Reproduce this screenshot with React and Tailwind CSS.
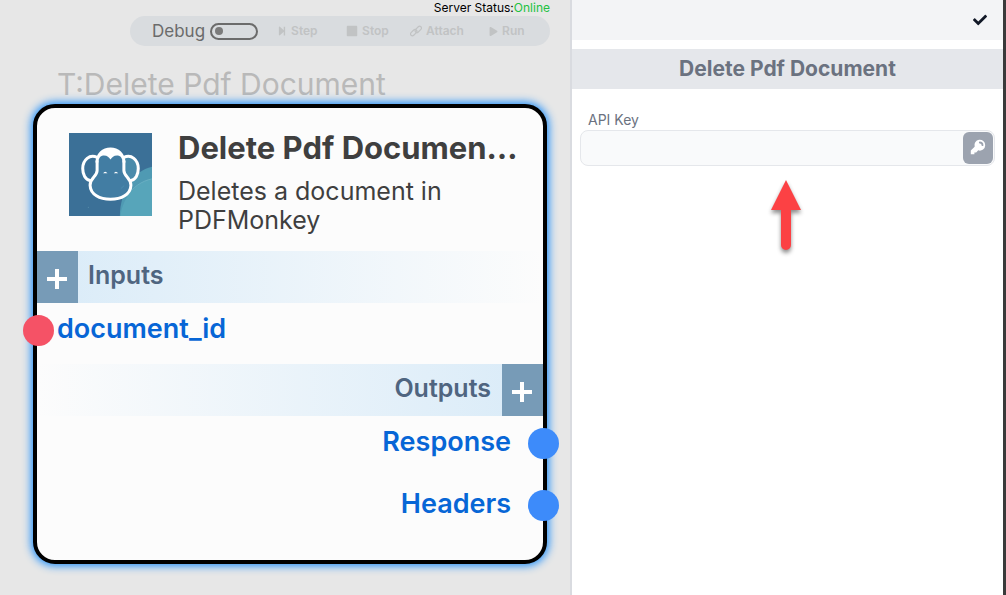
import React from "react";
import { FaCheck, FaPlay, FaStepForward, FaStop } from "react-icons/fa";
import { HiKey } from "react-icons/hi";

function MonkeyLogo() {
  return (
    <svg viewBox="0 0 248 248" className="size-[83px] shrink-0" role="img" aria-label="PDFMonkey">
      <rect width="248" height="248" fill="#3b7097" />
      <path d="M152 248C152 178 192 112 248 101V248Z" fill="#4f9ab3" />
      <path d="M154 248C160 190 205 144 248 137V248Z" fill="#57a5ba" />
      <path d="M248 137C218 143 190 162 172 190" fill="none" stroke="#74b5c7" strokeWidth="2" />
      <path d="M163 72C185 62 207 76 208 106C209 126 199 143 185 145L163 123Z" fill="#4a8bab" />
      <path d="M86 76C96 36 152 36 162 76V116C163 130 176 134 184 146C198 218 50 218 62 146C72 134 86 130 86 116Z" fill="#427da3" />
      <path d="M79 88C80 60 100 43 124 43C148 43 168 60 169 88H160C160 76 155 68 146 67C134 66 129 72 124 79C119 72 114 66 102 67C93 68 88 76 88 88Z" fill="#fff" />
      <g fill="none" stroke="#fff" strokeWidth="9" strokeLinecap="round" strokeLinejoin="round">
        <path d="M84 73C62 62 41 80 41 106C41 124 49 140 63 142" />
        <path d="M164 73C186 62 207 80 207 106C207 124 199 140 185 142" />
        <path d="M84 84V112C84 130 63 134 63 156C64 184 92 198 124 198C156 198 184 184 185 156C185 134 164 130 164 112V84" />
      </g>
      <path d="M102 120Q108 111 115 120ZM134 120Q140 111 147 120Z" fill="#fff" />
      <path d="M155 166L165 157" stroke="#4f93b3" strokeWidth="2" />
      <circle cx="58" cy="222" r="2" fill="#5389a8" />
    </svg>
  );
}

function ChainIcon({ className }) {
  return (
    <svg viewBox="0 0 26 26" className={className} fill="none" stroke="currentColor" strokeWidth="2.6" aria-hidden="true">
      <g transform="rotate(-45 13 13)">
        <rect x="-1" y="8" width="16" height="8" rx="4" />
        <rect x="11" y="10" width="16" height="8" rx="4" />
      </g>
    </svg>
  );
}

function ToolButton({ icon: Icon, size = "size-3", children, className }) {
  return (
    <button type="button" disabled className={`flex items-center gap-1 text-xs font-semibold text-[#c1c3c4] ${className}`}>
      <Icon className={size} />
      {children}
    </button>
  );
}

function Toolbar() {
  return (
    <div className="mt-4 ml-[130px] flex h-[30px] w-[420px] items-center rounded-[15px] bg-[#d9dcdf] pl-[22px]">
      <label className="flex items-center gap-[5px] text-[17px] leading-6 text-[#6b6b6b]">
        Debug
        <span className="relative flex h-[17px] w-12 items-center rounded-full border-2 border-[#6b6b6b] pl-[3px]">
          <input type="checkbox" role="switch" className="absolute inset-0 m-0 appearance-none" />
          <span className="size-2 rounded-full bg-[#7b7b7b]" />
        </span>
      </label>
      <div className="ml-[19px] flex items-center">
        <ToolButton icon={FaStepForward} size="size-2.5" className="w-[69px]">Step</ToolButton>
        <ToolButton icon={FaStop} className="w-16">Stop</ToolButton>
        <ToolButton icon={ChainIcon} className="w-[79px]">Attach</ToolButton>
        <ToolButton icon={FaPlay} size="size-[9px]" className="w-12">Run</ToolButton>
      </div>
    </div>
  );
}

function AddButton({ label }) {
  return (
    <button type="button" aria-label={label} className="grid h-full w-[41px] shrink-0 place-items-center bg-[#779bb7] pt-1 pr-0.5">
      <svg viewBox="0 0 20 20" className="size-5" stroke="#fff" strokeWidth="4" aria-hidden="true">
        <path d="M10 0V20M0 10H20" />
      </svg>
    </button>
  );
}

function NodeCard() {
  return (
    <article className="relative ml-[33px] h-[460px] w-[514px] rounded-[22px] border-4 border-black bg-[#fcfcfc] shadow-[0_0_8px_2px_#2290fa]">
      <header className="flex h-[143px] gap-[26px] pt-[25px] pr-5 pl-8">
        <MonkeyLogo />
        <div className="min-w-0 flex-1">
          <h2 className="text-[31px] leading-[30px] font-bold whitespace-nowrap text-[#3f3f3f]">Delete Pdf Documen…</h2>
          <p className="mt-3.5 text-[25px] leading-[29px] text-[#3f3f3f]">Deletes a document in PDFMonkey</p>
        </div>
      </header>
      <section>
        <div className="flex h-[52px] items-center bg-linear-to-r from-[#d9ebf8] to-[#fcfcfc]">
          <AddButton label="Add input" />
          <h3 className="pb-1 pl-[10px] text-[25px] leading-8 font-semibold text-[#4f6580]">Inputs</h3>
        </div>
        <div className="relative flex h-[61px] items-start pt-2 pl-5">
          <span className="absolute top-3 -left-[14px] size-[31px] rounded-full bg-[#f55266]" />
          <span className="text-[27px] leading-9 font-semibold text-[#0766d6]">document_id</span>
        </div>
      </section>
      <section>
        <div className="flex h-[52px] items-center justify-end bg-linear-to-l from-[#d9ebf8] to-[#fcfcfc]">
          <h3 className="pr-[11px] pb-1 text-[25px] leading-8 font-semibold text-[#4f6580]">Outputs</h3>
          <AddButton label="Add output" />
        </div>
        {["Response", "Headers"].map((name) => (
          <div key={name} className="relative flex h-[62px] items-start justify-end pt-2 pr-8">
            <span className="text-[27px] leading-9 font-semibold text-[#0766d6]">{name}</span>
            <span className="absolute top-3 -right-[16px] size-[31px] rounded-full bg-[#3d8bfa]" />
          </div>
        ))}
      </section>
    </article>
  );
}

function Canvas() {
  return (
    <main className="min-w-0 border-r-2 border-[#d9dbe0] bg-[#e7e7e7]">
      <div className="relative">
        <p className="absolute top-0 right-5 text-xs text-black">
          Server Status:<span className="text-[#22c241]">Online</span>
        </p>
      </div>
      <div className="flow-root">
        <Toolbar />
      </div>
      <h1 className="mt-5 mb-0.5 pl-[57px] text-[30px] leading-9 text-[#b9b9b9]">T:Delete Pdf Document</h1>
      <NodeCard />
    </main>
  );
}

function Properties() {
  return (
    <aside className="min-w-0 border-r-3 border-[#3a3a3a] bg-white">
      <div className="flex h-10 items-center justify-end bg-[#f3f4f6] pr-4">
        <button type="button" aria-label="Confirm" className="text-[#111827]">
          <FaCheck className="size-[14px]" />
        </button>
      </div>
      <h2 className="mt-[9px] h-10 bg-[#e5e7eb] text-center text-[21px] leading-10 font-bold text-[#6b7280]">
        Delete Pdf Document
      </h2>
      <div className="mt-[21px] pr-2 pl-2">
        <label htmlFor="api-key" className="block pl-2 text-sm text-[#6b7280]">API Key</label>
        <div className="flex h-9 items-center rounded-lg border border-[#e5e7eb] bg-[#f9fafb] pr-px">
          <input id="api-key" type="text" className="h-full min-w-0 flex-1 bg-transparent px-2 text-sm outline-none" />
          <button type="button" aria-label="Choose key" className="grid h-8 w-[30px] place-items-center rounded-md bg-[#9ca3af] pb-0.5 text-white">
            <HiKey className="size-[18px]" />
          </button>
        </div>
      </div>
      <svg viewBox="0 0 50 90" className="mt-[5px] ml-[189px] h-[90px] w-[50px] drop-shadow-[0_3px_2px_rgba(0,0,0,0.45)]" aria-hidden="true">
        <path d="M25 9L40 39H30V74A5 5 0 0 1 20 74V39H10Z" fill="#fc4144" />
      </svg>
    </aside>
  );
}

export default function App() {
  return (
    <div className="grid min-h-screen grid-cols-[572fr_434fr] font-['Inter',sans-serif]">
      <Canvas />
      <Properties />
    </div>
  );
}
